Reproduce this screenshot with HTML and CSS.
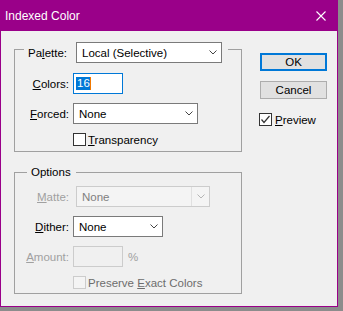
FILE: index.html
```html
<!DOCTYPE html>
<html>
    <head>
        <title>Indexed Color</title>
        <meta charset="UTF-8">
        <meta name="viewport" content="width=device-width, initial-scale=1.0">
        <link rel="stylesheet" href="styles.css">
    </head>
    <body>
        <div class="dialog">
            <div class="titlebar">
                <span class="title">Indexed Color</span>
                <svg class="close" width="10" height="10" viewBox="0 0 10 10">
                    <path d="M0.5 0.5L9.5 9.5M9.5 0.5L0.5 9.5" stroke="#fff" stroke-width="1.1"/>
                </svg>
            </div>

            <div class="content">
                <div class="main">
                    <fieldset class="group">
                        <legend class="palette-row">
                            <span class="lbl">Pa<u>l</u>ette:</span>
                            <div class="dropdown w-palette">
                                <span>Local (Selective)</span>
                                <svg class="chevron" width="8" height="5" viewBox="0 0 8 5"><polyline points="0.5,0.5 4,4 7.5,0.5" fill="none" stroke="#444"/></svg>
                            </div>
                        </legend>
                        <div class="form-grid">
                            <span class="lbl"><u>C</u>olors:</span>
                            <div class="field w-small focused"><span class="sel">16</span><span class="caret"></span></div>

                            <span class="lbl"><u>F</u>orced:</span>
                            <div class="dropdown w-forced">
                                <span>None</span>
                                <svg class="chevron" width="8" height="5" viewBox="0 0 8 5"><polyline points="0.5,0.5 4,4 7.5,0.5" fill="none" stroke="#444"/></svg>
                            </div>

                            <div class="check">
                                <span class="box"></span>
                                <span><u>T</u>ransparency</span>
                            </div>
                        </div>
                    </fieldset>

                    <fieldset class="group options">
                        <legend class="options-legend">Options</legend>
                        <div class="form-grid">
                            <span class="lbl disabled"><u>M</u>atte:</span>
                            <div class="dropdown w-matte is-disabled">
                                <span>None</span>
                                <span class="arrow-cell">
                                    <svg class="chevron" width="8" height="5" viewBox="0 0 8 5"><polyline points="0.5,0.5 4,4 7.5,0.5" fill="none" stroke="#b5b5b5"/></svg>
                                </span>
                            </div>

                            <span class="lbl"><u>D</u>ither:</span>
                            <div class="dropdown w-dither">
                                <span>None</span>
                                <svg class="chevron" width="8" height="5" viewBox="0 0 8 5"><polyline points="0.5,0.5 4,4 7.5,0.5" fill="none" stroke="#444"/></svg>
                            </div>

                            <span class="lbl disabled"><u>A</u>mount:</span>
                            <div class="amount">
                                <div class="field w-small is-disabled"></div>
                                <span class="disabled">%</span>
                            </div>

                            <div class="check muted">
                                <span class="box is-disabled"></span>
                                <span>Preserve <u>E</u>xact Colors</span>
                            </div>
                        </div>
                    </fieldset>
                </div>

                <div class="actions">
                    <button type="button" class="btn btn-default">OK</button>
                    <button type="button" class="btn">Cancel</button>
                    <div class="check preview">
                        <span class="box">
                            <svg width="11" height="11" viewBox="0 0 11 11"><polyline points="1.5,5.5 4,8.5 9.5,2" fill="none" stroke="#333" stroke-width="1.2"/></svg>
                        </span>
                        <span><u>P</u>review</span>
                    </div>
                </div>
            </div>
        </div>
    </body>
</html>
```

FILE: styles.css
```css
* {
    box-sizing: border-box;
}
body {
    margin: 0;
    background-color: #8c8c8c;
    font-family: "Liberation Sans", Arial, sans-serif;
    font-size: 11.5px;
    color: #000;
}
u {
    text-underline-offset: 1px;
}
.dialog {
    width: 338px;
    height: 307px;
    border: 1px solid #9a0089;
    background-color: #f0f0f0;
}
.titlebar {
    height: 30px;
    background-color: #9a0089;
    color: #fff;
    display: flex;
    align-items: center;
    justify-content: space-between;
    padding: 0 11px 0 4px;
    font-size: 12px;
}
.content {
    display: flex;
    padding: 4px 0 0 13px;
}
.main {
    width: 228px;
    display: flex;
    flex-direction: column;
    gap: 13px;
}
.group {
    margin: 0;
    min-width: 0;
    padding: 10px 0 5px;
    border: 1px solid #a0a0a0;
}
.group.options {
    padding-top: 7px;
    padding-bottom: 4px;
}
.palette-row {
    display: flex;
    align-items: center;
    gap: 9px;
    margin-left: 9px;
    padding: 7px 6px 0 4px;
}
.options-legend {
    margin-left: 12px;
    padding: 0 5px 0 4px;
    line-height: 14px;
}
.form-grid {
    display: grid;
    grid-template-columns: 54px auto;
    column-gap: 4px;
    row-gap: 9px;
    align-items: center;
    justify-items: start;
}
.form-grid .lbl {
    justify-self: end;
}
.disabled {
    color: #a0a0a0;
}
.dropdown {
    height: 21px;
    border: 1px solid #7a7a7a;
    background-color: #fff;
    display: flex;
    align-items: center;
    justify-content: space-between;
    padding: 0 4px 0 5px;
}
.chevron {
    display: block;
}
.w-palette { width: 146px; }
.w-forced { width: 125px; }
.w-dither { width: 90px; }
.w-matte {
    width: 134px;
    margin-left: 3px;
}
.w-small { width: 50px; }
.dropdown.is-disabled {
    border-color: #cccccc;
    background-color: #f4f4f4;
    color: #808080;
    padding-right: 0;
}
.arrow-cell {
    height: 100%;
    width: 18px;
    border-left: 1px solid #e0e0e0;
    display: flex;
    align-items: center;
    justify-content: center;
}
.field {
    height: 21px;
    border: 1px solid #7a7a7a;
    background-color: #fff;
    display: flex;
    align-items: center;
    padding-left: 2px;
}
.field.focused {
    border-color: #0078d7;
}
.field.is-disabled {
    border-color: #cccccc;
    background-color: #f0f0f0;
}
.sel {
    background-color: #0078d7;
    color: #fff;
    line-height: 13px;
    padding: 0 0 0 1px;
}
.caret {
    width: 1px;
    height: 13px;
    background-color: #f07800;
}
.amount {
    display: flex;
    align-items: center;
    gap: 5px;
}
.check {
    grid-column: 2;
    display: flex;
    align-items: center;
    gap: 2px;
    height: 13px;
}
.box {
    width: 13px;
    height: 13px;
    border: 1px solid #333;
    background-color: #fff;
    display: flex;
    align-items: center;
    justify-content: center;
}
.box.is-disabled {
    border-color: #cccccc;
    background-color: #f4f4f4;
}
.check.muted {
    color: #6d6d6d;
}
.actions {
    margin: 18px 0 0 18px;
    display: flex;
    flex-direction: column;
    align-items: flex-start;
}
.btn {
    width: 67px;
    height: 18px;
    margin: 0;
    padding: 0;
    background-color: #e1e1e1;
    border: 1px solid #adadad;
    font: inherit;
    color: #000;
}
.btn-default {
    border: 2px solid #0078d7;
}
.btn + .btn {
    margin-top: 10px;
}
.check.preview {
    margin: 14px 0 0 -1px;
    gap: 3px;
}
```
